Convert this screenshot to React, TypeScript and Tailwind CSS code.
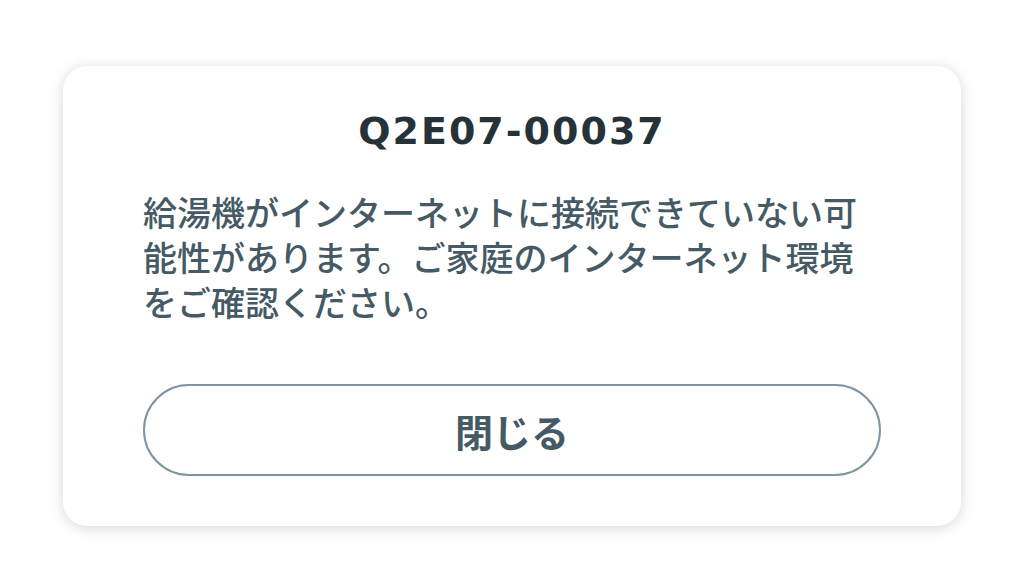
export default function App() {
  return (
    <div className="w-[1024px] h-[576px] bg-white flex items-start justify-center pt-[66px]">
      <div className="w-[898px] bg-white rounded-[24px] shadow-[0_2px_14px_rgba(0,0,0,0.16)] px-[80px] pt-[44px] pb-[50px] flex flex-col">
        <h1 className="text-center text-[38px] leading-[43px] font-bold tracking-[2px] text-[#263238] [font-family:'DejaVu_Sans',sans-serif]">
          Q2E07-00037
        </h1>
        <p className="mt-[36px] text-[34px] leading-[45px] font-medium text-[#455a64] [font-family:'Noto_Sans_CJK_JP',sans-serif]">
          給湯機がインターネットに接続できていない可能性があります。ご家庭のインターネット環境をご確認ください。
        </p>
        <button className="mt-[60px] h-[92px] w-full rounded-full border-2 border-[#7f959f] bg-white text-[38px] font-bold text-[#455a64] [font-family:'Noto_Sans_CJK_JP',sans-serif]">
          閉じる
        </button>
      </div>
    </div>
  );
}
